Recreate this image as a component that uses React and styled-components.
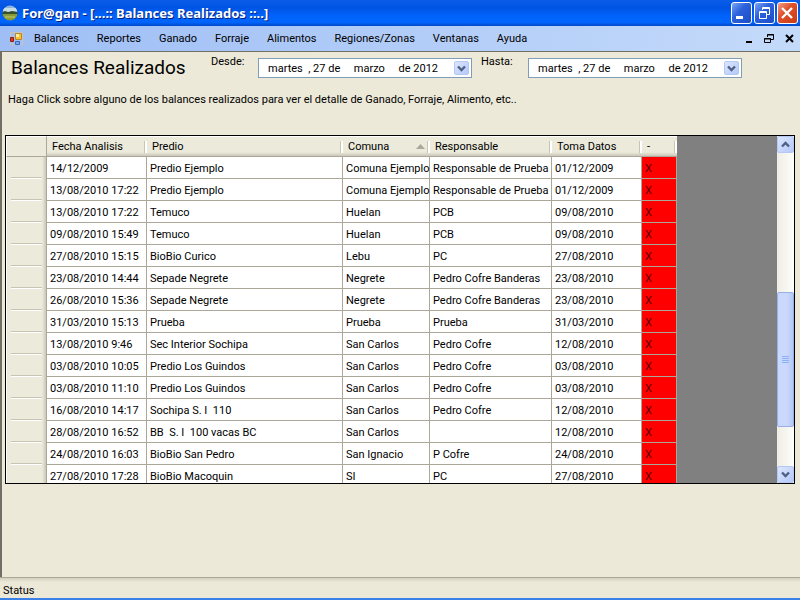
import styled, { createGlobalStyle, css } from 'styled-components';

const GlobalStyle = createGlobalStyle`
  * { box-sizing: border-box; }
  body {
    margin: 0;
    font-family: Roboto, "Liberation Sans", sans-serif;
    font-size: 11px;
    line-height: 14px;
    color: #000;
  }
  button, input, table { font: inherit; color: inherit; }
  button { padding: 0; border: 0; background: none; }
`

const Window = styled.div`
  display: flex;
  flex-direction: column;
  height: 100vh;
  background: #ece9d8;
  border-bottom: 2px solid #3a80e8;
`

const TitleBar = styled.header`
  display: flex;
  align-items: center;
  gap: 4px;
  flex: 0 0 26px;
  padding: 0 2px;
  background: linear-gradient(#0a5ce8, #0054e3 30%, #0062fa 60%, #0066ff 85%, #0048c8);
`

const Title = styled.h1`
  flex: 1;
  margin: 0;
  font: bold 13px/20px "Noto Sans", sans-serif;
  color: #fff;
  text-shadow: 1px 1px #0a1f7c;
  white-space: nowrap;
`

const CaptionButton = styled.button`
  display: flex;
  width: 21px;
  height: 22px;
  margin-left: -2px;
  border: 1px solid #fff;
  border-radius: 3px;
  background: ${(props) => props.$close
    ? 'linear-gradient(135deg, #f0a088, #e0502c 40%, #c83c14)'
    : 'linear-gradient(135deg, #7ca4f4, #2c62dc 40%, #1c4cc8)'};
`

const MenuBar = styled.nav`
  display: flex;
  align-items: center;
  flex: 0 0 25px;
  padding: 0 4px 0 8px;
  background: linear-gradient(90deg, #9ebef5, #c4dafa);
`

const MenuItems = styled.div`
  display: flex;
  flex: 1;
  gap: 18px;
  margin-left: 10px;
`

const MenuItem = styled.button`
  white-space: nowrap;
`

const MdiButton = styled.button`
  display: flex;
  margin-left: 8px;
`

const Client = styled.main`
  flex: 1;
  min-height: 0;
  padding: 2px 5px 0 3px;
  border: solid #716f64;
  border-width: 1px 0 0 2px;
`

const Filters = styled.section`
  display: flex;
  align-items: flex-start;
`

const Heading = styled.h2`
  width: 206px;
  margin: 0;
  padding-left: 6px;
  font-size: 19px;
  font-weight: normal;
  line-height: 28px;
  white-space: nowrap;
`

const DateField = styled.div`
  display: flex;
  width: 270px;
`

const DateLabel = styled.label`
  width: 47px;
  padding-top: 1px;
`

const Picker = styled.div`
  display: flex;
  align-items: center;
  width: 214px;
  height: 20px;
  margin-top: 4px;
  padding-right: 2px;
  border: 1px solid #7f9db9;
  background: #fff;
`

const PickerInput = styled.input`
  flex: 1;
  min-width: 0;
  padding: 2px 0 0 9px;
  border: 0;
  outline: 0;
  background: none;
`

const blueButton = css`
  display: flex;
  align-items: center;
  justify-content: center;
  border: 1px solid #b4c8f6;
  border-radius: 2px;
  background: linear-gradient(135deg, #dce6fe, #b4c8f8);
`

const DropButton = styled.button`
  ${blueButton}
  width: 15px;
  height: 14px;
`

const Hint = styled.p`
  margin: 11px 0 28px 3px;
`

const Grid = styled.section`
  display: flex;
  height: 349px;
  border: 1px solid #000;
  background: #808080;
`

const GridView = styled.div`
  flex: 1;
  min-width: 0;
  overflow: hidden;
`

const Table = styled.table`
  width: 671px;
  table-layout: fixed;
  border-collapse: separate;
  border-spacing: 0;
  background: #fff;
`

const HeadCell = styled.th`
  position: relative;
  width: ${(props) => props.$width}px;
  height: 21px;
  padding: 0 5px;
  border-top: 1px solid #fff;
  border-bottom: 1px solid #aca899;
  background: linear-gradient(#ebeadb 80%, #cbc7b8);
  font-weight: normal;
  text-align: left;
  white-space: nowrap;

  &:first-child {
    border-left: 1px solid #fff;
    border-right: 1px solid #aca899;
    background: #ebeadb;
  }

  &:not(:first-child)::after {
    content: '';
    position: absolute;
    top: 4px;
    right: 0;
    width: 2px;
    height: 12px;
    border-left: 1px solid #c7c5b2;
    background: #fff;
  }
`

const SortArrow = styled.svg`
  position: absolute;
  top: 7px;
  right: 5px;
`

const RowHead = styled.th`
  height: 22px;
  padding: 0 4px;
  border-left: 1px solid #fff;
  border-right: 1px solid #aca899;
  background: linear-gradient(90deg, #ebeadb 90%, #cbc7b8);
  vertical-align: bottom;
`

const Groove = styled.div`
  height: 2px;
  border-top: 1px solid #c7c5b2;
  background: #fff;
`

const Cell = styled.td`
  height: 22px;
  padding: 2px 3px 0;
  border-right: 1px solid #aca899;
  border-bottom: 1px solid #aca899;
  white-space: pre;
`

const DeleteCell = styled(Cell)`
  background: #f00;
`

const DeleteButton = styled.button`
  display: block;
  color: #600000;
`

const ScrollBar = styled.div`
  display: flex;
  flex-direction: column;
  width: 17px;
  background: linear-gradient(90deg, #eeede5, #fefefb);
`

const ScrollButton = styled.button`
  ${blueButton}
  height: 17px;
`

const Track = styled.div`
  flex: 1;
`

const Thumb = styled.div`
  ${blueButton}
  height: 135px;
  margin-top: 139px;
  border-color: #98b0e8;
  background: linear-gradient(90deg, #c9d8fc 60%, #b4c8f8);
`

const StatusBar = styled.footer`
  flex: 0 0 21px;
  padding: 6px 3px 0;
  border-top: 1px solid #aca899;
  background: linear-gradient(#d4d0be, #ece9d8 4px);
`

const columns = [
  { title: '', width: 41 },
  { title: 'Fecha Analisis', width: 100 },
  { title: 'Predio', width: 196 },
  { title: 'Comuna', width: 87, sorted: true },
  { title: 'Responsable', width: 122 },
  { title: 'Toma Datos', width: 90 },
  { title: '-', width: 35 },
]

const balances = [
  ['14/12/2009', 'Predio Ejemplo', 'Comuna Ejemplo', 'Responsable de Prueba', '01/12/2009'],
  ['13/08/2010 17:22', 'Predio Ejemplo', 'Comuna Ejemplo', 'Responsable de Prueba', '01/12/2009'],
  ['13/08/2010 17:22', 'Temuco', 'Huelan', 'PCB', '09/08/2010'],
  ['09/08/2010 15:49', 'Temuco', 'Huelan', 'PCB', '09/08/2010'],
  ['27/08/2010 15:15', 'BioBio Curico', 'Lebu', 'PC', '27/08/2010'],
  ['23/08/2010 14:44', 'Sepade Negrete', 'Negrete', 'Pedro Cofre Banderas', '23/08/2010'],
  ['26/08/2010 15:36', 'Sepade Negrete', 'Negrete', 'Pedro Cofre Banderas', '23/08/2010'],
  ['31/03/2010 15:13', 'Prueba', 'Prueba', 'Prueba', '31/03/2010'],
  ['13/08/2010 9:46', 'Sec Interior Sochipa', 'San Carlos', 'Pedro Cofre', '12/08/2010'],
  ['03/08/2010 10:05', 'Predio Los Guindos', 'San Carlos', 'Pedro Cofre', '03/08/2010'],
  ['03/08/2010 11:10', 'Predio Los Guindos', 'San Carlos', 'Pedro Cofre', '03/08/2010'],
  ['16/08/2010 14:17', 'Sochipa S. I  110', 'San Carlos', 'Pedro Cofre', '12/08/2010'],
  ['28/08/2010 16:52', 'BB  S. I  100 vacas BC', 'San Carlos', '', '12/08/2010'],
  ['24/08/2010 16:03', 'BioBio San Pedro', 'San Ignacio', 'P Cofre', '24/08/2010'],
  ['27/08/2010 17:28', 'BioBio Macoquin', 'SI', 'PC', '27/08/2010'],
]

const menus = ['Balances', 'Reportes', 'Ganado', 'Forraje', 'Alimentos', 'Regiones/Zonas', 'Ventanas', 'Ayuda']

function Chevron({ up }) {
  return (
    <svg width="9" height="7" viewBox="0 0 9 7" fill="none" stroke="#4d6185" strokeWidth="2.4">
      <path d={up ? 'M1 5.5L4.5 2L8 5.5' : 'M1 1.5L4.5 5L8 1.5'} />
    </svg>
  )
}

function AppLogo() {
  return (
    <svg width="16" height="16" viewBox="0 0 16 16">
      <defs>
        <clipPath id="globe"><circle cx="8" cy="8" r="7.5" /></clipPath>
      </defs>
      <g clipPath="url(#globe)">
        <path fill="#8fb4d8" d="M0 0h16v6H0z" />
        <path fill="#c8dce8" d="M0 3h16v4H0z" />
        <path fill="#34502c" d="M0 7l3-1 3 1 4-1 6 1v3H0z" />
        <path fill="#8a9a38" d="M0 9h16v7H0z" />
        <path fill="#a8b450" d="M3 11h10v2H3z" />
      </g>
    </svg>
  )
}

function FormIcon() {
  return (
    <svg width="16" height="16" viewBox="0 0 16 16">
      <path fill="none" stroke="#c8c4b8" d="M2.500 1.500h12v12h-12z" />
      <path fill="#f8c030" stroke="#b88828" d="M7.500 2.500h6v6h-6z" />
      <path fill="#fff0a0" d="M8 3h3v3H8z" />
      <path fill="#d83820" stroke="#902010" d="M2.500 6.500h3v4h-3z" />
      <path fill="#78a8f0" stroke="#3868b8" d="M7.500 10.500h4v3h-4z" />
    </svg>
  )
}

function DatePicker({ id, label }) {
  return (
    <DateField>
      <DateLabel htmlFor={id}>{label}</DateLabel>
      <Picker>
        <PickerInput id={id} defaultValue="martes  , 27 de     marzo     de 2012" />
        <DropButton aria-label="Abrir calendario"><Chevron /></DropButton>
      </Picker>
    </DateField>
  )
}

function BalancesTable() {
  return (
    <Table>
      <thead>
        <tr>
          {columns.map((col) => (
            <HeadCell key={col.title} $width={col.width}>
              {col.title}
              {col.sorted && (
                <SortArrow width="9" height="5" viewBox="0 0 9 5"><path fill="#aca899" d="M4.500 0L9 5H0z" /></SortArrow>
              )}
            </HeadCell>
          ))}
        </tr>
      </thead>
      <tbody>
        {balances.map((row, i) => (
          <tr key={i}>
            <RowHead><Groove /></RowHead>
            {row.map((value, j) => <Cell key={j}>{value}</Cell>)}
            <DeleteCell><DeleteButton>X</DeleteButton></DeleteCell>
          </tr>
        ))}
      </tbody>
    </Table>
  )
}

function App() {
  return (
    <>
      <GlobalStyle />
      <Window>
        <TitleBar>
          <AppLogo />
          <Title>For@gan - [...:: Balances Realizados ::..]</Title>
          <CaptionButton aria-label="Minimizar">
            <svg width="19" height="20"><path fill="#fff" d="M4 13h7v3H4z" /></svg>
          </CaptionButton>
          <CaptionButton aria-label="Restaurar">
            <svg width="19" height="20" fill="none" stroke="#fff">
              <path d="M7.500 7V4.500h7v7H12M7 5.500h8M4.500 8.500h7v7h-7zM4 9.500h8" />
            </svg>
          </CaptionButton>
          <CaptionButton aria-label="Cerrar" $close>
            <svg width="19" height="20" stroke="#fff" strokeWidth="2.400"><path d="M4 5l10 10M14 5L4 15" /></svg>
          </CaptionButton>
        </TitleBar>
        <MenuBar>
          <FormIcon />
          <MenuItems>
            {menus.map((name) => <MenuItem key={name}>{name}</MenuItem>)}
          </MenuItems>
          <MdiButton aria-label="Minimizar ventana">
            <svg width="12" height="12"><path d="M2 8h6v2H2z" /></svg>
          </MdiButton>
          <MdiButton aria-label="Restaurar ventana">
            <svg width="12" height="12" fill="none" stroke="#000">
              <path d="M3.500 4V1.500h6v5H7M3 2h7M.5 5.500h6v4h-6zM0 6h7" />
            </svg>
          </MdiButton>
          <MdiButton aria-label="Cerrar ventana">
            <svg width="12" height="12" stroke="#000" strokeWidth="2"><path d="M2 2l7 7M9 2L2 9" /></svg>
          </MdiButton>
        </MenuBar>
        <Client>
          <Filters>
            <Heading>Balances Realizados</Heading>
            <DatePicker id="desde" label="Desde:" />
            <DatePicker id="hasta" label="Hasta:" />
          </Filters>
          <Hint>Haga Click sobre alguno de los balances realizados para ver el detalle de Ganado, Forraje, Alimento, etc..</Hint>
          <Grid>
            <GridView>
              <BalancesTable />
            </GridView>
            <ScrollBar>
              <ScrollButton aria-label="Subir"><Chevron up /></ScrollButton>
              <Track>
                <Thumb>
                  <svg width="7" height="8" stroke="#8cb0f8"><path d="M0 .5h7M0 2.500h7M0 4.500h7M0 6.500h7" /></svg>
                </Thumb>
              </Track>
              <ScrollButton aria-label="Bajar"><Chevron /></ScrollButton>
            </ScrollBar>
          </Grid>
        </Client>
        <StatusBar>Status</StatusBar>
      </Window>
    </>
  )
}

export default App;
